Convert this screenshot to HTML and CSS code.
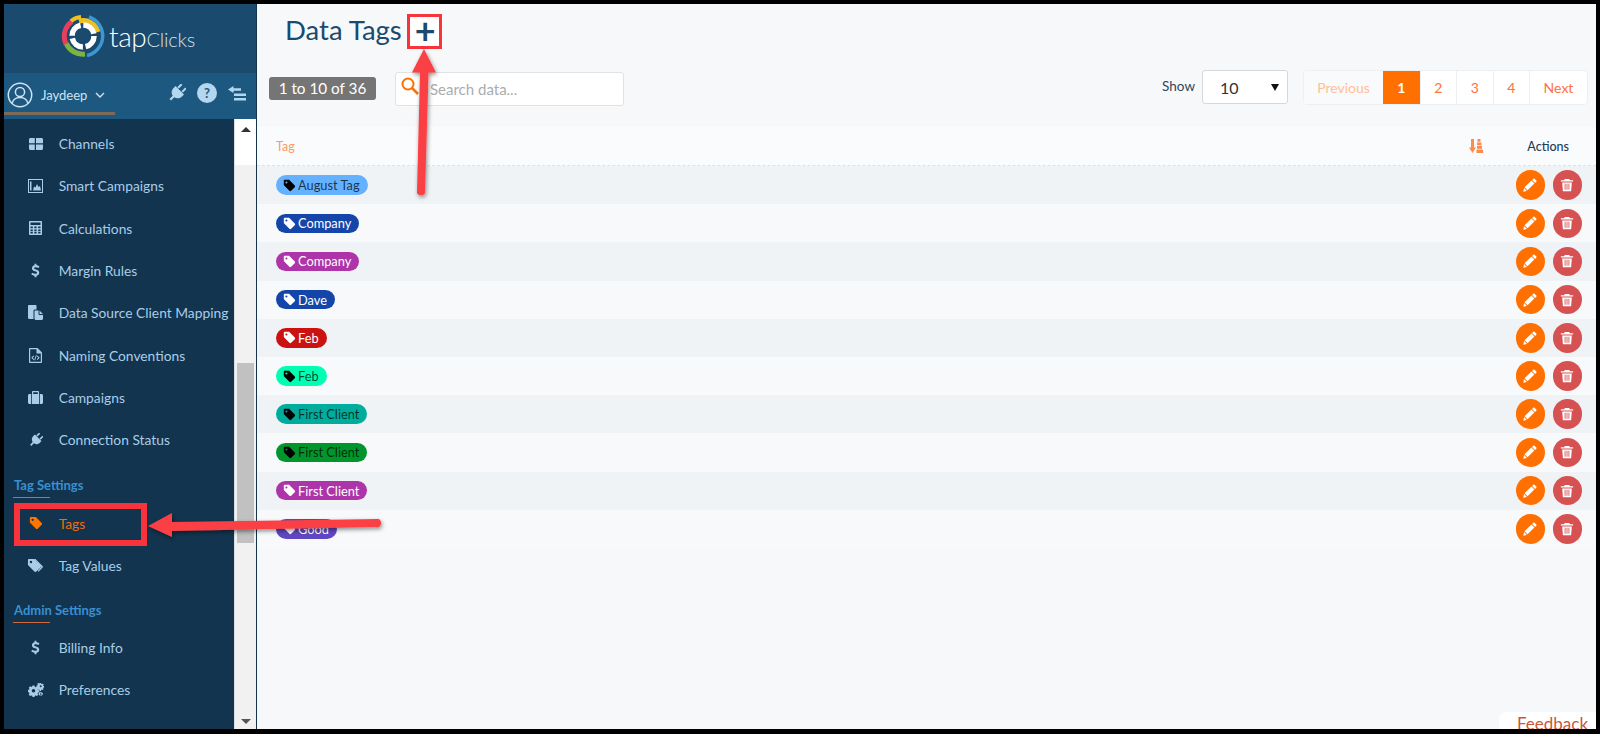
FILE: index.html
```html
<!DOCTYPE html>
<html lang="en">
<head>
<meta charset="utf-8">
<title>Data Tags</title>
<link rel="stylesheet" href="styles.css">
</head>
<body>
<svg class="defs" width="0" height="0">
  <defs>
    <symbol id="i-tag" viewBox="0 0 16 16"><path fill-rule="evenodd" d="M1 2.200C1 1.500 1.500 1 2.200 1H7c.5 0 .8.2 1.100.5l6.400 6.400c.6.6.6 1.500 0 2.100l-4.500 4.500c-.6.6-1.500.6-2.100 0L1.500 8.100C1.200 7.800 1 7.400 1 7zM4.200 3a1.300 1.300 0 1 0 0 2.600 1.300 1.300 0 0 0 0-2.600z"/></symbol>
    <symbol id="i-pencil" viewBox="0 0 16 16"><path d="M11.800.8c.4-.4 1-.4 1.400 0l2 2c.4.4.4 1 0 1.400l-1.400 1.400-3.400-3.400zM9.600 2.900 13 6.300 5.200 14.100 1.800 10.700zM1.200 11.500 4.500 14.800.4 15.600z"/></symbol>
    <symbol id="i-trash" viewBox="0 0 16 16"><path fill-rule="evenodd" d="M5.500 1h5l.8 1.500H15V4H1V2.500h3.700zM2.500 5h11l-.8 10H3.300zM5.300 6.500v7h1v-7zM7.500 6.500v7h1v-7zM9.700 6.500v7h1v-7z"/></symbol>
    <symbol id="i-plug" viewBox="0 0 16 16"><g transform="rotate(45 8 8)"><path d="M4.500-.5H6.300V4H4.500zM9.700-.5h1.800V4H9.700zM2.700 4.500h10.600V7c0 2.900-2.100 5.100-4.300 5.400V16.500H7V12.400C4.800 12.100 2.700 9.900 2.700 7z"/></g></symbol>
    <symbol id="i-dollar" viewBox="0 0 16 16"><path d="M7 .8h2v1.700c1.300.1 2.400.5 3.200 1.100l-1 1.800c-.9-.6-1.900-.9-3-.9-1 0-1.600.4-1.600 1 0 .7.700 1 2 1.400 1.900.6 3.400 1.300 3.400 3.400 0 1.700-1.200 2.900-3 3.200v1.700H7v-1.700c-1.400-.1-2.700-.6-3.600-1.400l1.100-1.800c1 .8 2.100 1.200 3.300 1.200 1.100 0 1.800-.4 1.800-1.100 0-.8-.8-1.100-2.100-1.500-1.800-.6-3.300-1.300-3.300-3.300 0-1.700 1.200-2.900 2.800-3.200z"/></symbol>
  </defs>
</svg>
<div class="app">
  <aside class="sidebar">
    <div class="brand">
      <svg class="logo-mark" viewBox="0 0 44 44" width="44" height="44" fill="none">
        <path d="M18 7A15.500 15.500 0 0 1 37 18" stroke="#f2c01e" stroke-width="5"/>
        <path d="M28 3A20 20 0 0 1 26 41.500" stroke="#3d97d3" stroke-width="3.500"/>
        <path d="M24 40A18 18 0 0 1 5 29" stroke="#7cb342" stroke-width="5"/>
        <path d="M5 30A18 18 0 0 1 11 7.500" stroke="#e8405c" stroke-width="5"/>
        <path d="M10 7A18 18 0 0 1 20 3" stroke="#f2c01e" stroke-width="4"/>
        <circle cx="22" cy="22" r="11" stroke="#fff" stroke-width="5.500" stroke-dasharray="14.500 2.780"/>
      </svg>
      <div class="logo-text"><span class="tap">tap</span><span class="clicks">Clicks</span></div>
    </div>
    <div class="userbar">
      <svg class="avatar" viewBox="0 0 26 26" width="26" height="26" fill="none" stroke="#cfe3f2" stroke-width="1.500"><circle cx="13" cy="13" r="11.700"/><circle cx="13" cy="10" r="4.600"/><path d="M5 21.500c1-4 4-6 8-6s7 2 8 6"/></svg>
      <span class="username">Jaydeep</span>
      <svg class="chev" viewBox="0 0 10 6" width="10" height="6" fill="none" stroke="#cfe3f2" stroke-width="1.400"><path d="M1 1l4 4 4-4"/></svg>
      <div class="user-tools">
        <svg class="ico-light" width="18" height="18"><use href="#i-plug"/></svg>
        <span class="help">?</span>
        <svg class="lines" viewBox="0 0 18 15" width="18" height="15"><path fill="#b4d6ee" d="M5.500 0V2.300H13V4.700H5.500V7L0 3.500zM6 7.500H18V10H6zM6 12H18V14.500H6z"/></svg>
      </div>
    </div>
    <div class="side-body">
      <nav class="menu">
        <a class="item"><span class="mi"><svg viewBox="0 0 14 12" width="14" height="12"><path d="M0 1.500C0 .7.700 0 1.500 0h4.300v5.300H0zM7 0h5.500c.8 0 1.500.7 1.500 1.500v3.800H7zM0 6.500h5.800V12H1.500C.7 12 0 11.300 0 10.500zM7 6.500h7v4c0 .8-.7 1.500-1.500 1.500H7z"/></svg></span>Channels</a>
        <a class="item"><span class="mi"><svg viewBox="0 0 15 14" width="15" height="14"><path fill-rule="evenodd" d="M0 0h15v14H0zM1 1v12h13V1zM2 2.500h1.500v9H2zM5 11.500l1-4 1.500 1L9 5l1.500 3 1.500-1 1 4.500z"/></svg></span>Smart Campaigns</a>
        <a class="item"><span class="mi"><svg viewBox="0 0 13 14" width="13" height="14"><path fill-rule="evenodd" d="M1 0h11c.6 0 1 .4 1 1v12c0 .6-.4 1-1 1H1c-.6 0-1-.4-1-1V1c0-.6.4-1 1-1zM1.500 1.500v2.500h10V1.500zM1.500 5.500v1.800h2.300V5.500zM5.300 5.500v1.800h2.300V5.500zM9.200 5.500v1.800h2.300V5.500zM1.500 8.500v1.800h2.300V8.500zM5.300 8.500v1.800h2.300V8.500zM9.200 8.500v1.800h2.300V8.500zM1.500 11v1.500h2.300V11zM5.300 11v1.500h2.300V11zM9.200 11v1.500h2.300V11z"/></svg></span>Calculations</a>
        <a class="item"><span class="mi"><svg width="15" height="15"><use href="#i-dollar"/></svg></span>Margin Rules</a>
        <a class="item"><span class="mi"><svg viewBox="0 0 15 15" width="15" height="15"><path d="M0 1.200C0 .5.500 0 1.200 0h6.300c.6 0 1 .4 1 1v3.500H7C6 4.500 5.500 5 5.500 6v8H1.200C.5 14 0 13.500 0 12.800zM6.500 6.500c0-.6.400-1 1-1h3V9c0 .5.500 1 1 1H15v3.800c0 .6-.5 1.200-1.200 1.200H7.700c-.7 0-1.200-.5-1.200-1.200zM11.500 5.500 15 9h-3.500z"/></svg></span>Data Source Client Mapping</a>
        <a class="item"><span class="mi"><svg viewBox="0 0 13 15" width="13" height="15"><path fill-rule="evenodd" d="M1 0h7.500L13 4.500V14c0 .6-.4 1-1 1H1c-.6 0-1-.4-1-1V1c0-.6.400-1 1-1zM1.200 1.200v12.600h10.600V5.500H7.500V1.200zM4.500 7.500l.7.7L3.700 9.800l1.500 1.500-.7.7L2.300 9.800zM8.500 7.500l2.200 2.300L8.500 12l-.7-.7 1.500-1.500-1.500-1.600zM7 7l.8.2-1.800 5.300-.8-.2z"/></svg></span>Naming Conventions</a>
        <a class="item"><span class="mi"><svg viewBox="0 0 15 13" width="15" height="13"><path fill-rule="evenodd" d="M5 0h5c.6 0 1 .4 1 1v2h2.500c.8 0 1.500.7 1.500 1.500v7c0 .8-.7 1.500-1.500 1.500h-12C.7 13 0 12.300 0 11.500v-7C0 3.700.7 3 1.500 3H4V1c0-.6.400-1 1-1zM5.200 1.200V3h4.600V1.200zM3 3v10h.8V3zM11.200 3v10h.8V3z"/></svg></span>Campaigns</a>
        <a class="item"><span class="mi"><svg width="14" height="14"><use href="#i-plug"/></svg></span>Connection Status</a>
        <div class="section">Tag Settings</div>
        <a class="item active"><span class="mi"><svg width="14" height="14"><use href="#i-tag"/></svg></span>Tags</a>
        <a class="item"><span class="mi"><svg viewBox="0 0 17 15" width="17" height="15"><use href="#i-tag" width="15" height="15"/><path d="M8.500 1l7 7c.5.500.5 1.200 0 1.700l-4 4-.8-.8 3.700-4-7.500-7.900z"/></svg></span>Tag Values</a>
        <div class="section">Admin Settings</div>
        <a class="item"><span class="mi"><svg width="15" height="15"><use href="#i-dollar"/></svg></span>Billing Info</a>
        <a class="item"><span class="mi"><svg viewBox="0 0 16 14" width="16" height="14"><path fill-rule="evenodd" d="M4.500 2.500h2l.3 1.300 1 .4 1.100-.7 1.400 1.400-.7 1.100.4 1 1.300.3v2l-1.300.3-.4 1 .7 1.100-1.400 1.400-1.100-.7-1 .4-.3 1.300h-2l-.3-1.300-1-.4-1.100.7L.7 11.500l.7-1.100-.4-1-1-.3v-2l1-.3.4-1-.7-1.100 1.400-1.400 1.100.7 1-.4zM5.500 6a1.800 1.800 0 1 0 0 3.600 1.800 1.800 0 0 0 0-3.600z"/><path fill-rule="evenodd" d="M13 0l.4 1 .9.100.5-.5.9.9-.5.700.2.800 1 .2v1.300l-1 .2-.3.800.5.700-.9.900-.7-.5-.8.3-.2 1h-1.300l-.2-1-.7-.3-.7.500-.9-.9.500-.7-.3-.8-.8-.2V2.400l.9-.2.3-.8-.5-.7.9-.9.700.5.700-.1zM12.700 2.300a1 1 0 1 0 0 2 1 1 0 0 0 0-2zM13 9l.8.200.3.800.8.100v1.400l-.8.200-.3.800-.8.200-.7-.5-.8.3-.9-.9.300-.8-.5-.7.900-.9.800.200zM12.800 10.300a.8.8 0 1 0 0 1.600.8.8 0 0 0 0-1.600z"/></svg></span>Preferences</a>
      </nav>
      <div class="scrollbar">
        <div class="sb-top"><span class="arrow-up"></span></div>
        <div class="sb-gap"></div>
        <div class="sb-thumb"></div>
        <div class="sb-fill"></div>
        <div class="sb-bottom"><span class="arrow-down"></span></div>
      </div>
    </div>
  </aside>
  <main class="content">
    <header class="titlebar">
      <h1>Data Tags</h1>
      <span class="add">+</span>
    </header>
    <div class="toolbar">
      <span class="count">1 to 10 of 36</span>
      <label class="search">
        <svg class="search-ico" viewBox="0 0 18 18" width="18" height="18" fill="none" stroke="#ff6f00" stroke-width="2"><circle cx="7" cy="7" r="5.500"/><path d="M11 11l6 6" stroke-width="2.500"/></svg>
        <span class="placeholder">Search data...</span>
      </label>
      <span class="show">Show</span>
      <div class="select"><span>10</span><i class="caret"></i></div>
      <div class="pager">
        <span class="pg prev">Previous</span>
        <span class="pg cur">1</span>
        <span class="pg">2</span>
        <span class="pg">3</span>
        <span class="pg">4</span>
        <span class="pg next">Next</span>
      </div>
    </div>
    <div class="table">
      <div class="thead">
        <span class="th-tag">Tag</span>
        <svg class="sort" viewBox="0 0 14 14" width="14" height="14" fill="#ff8a4c"><path d="M2 0h3v8.500h2L3.500 14 0 8.500h2zM8.500 0h3v2.800h-3zM8 3.500h4.500v2.800H8zM8 7h5v2.800H8zM7.500 10.500H14V14H7.500z"/></svg>
        <span class="th-actions">Actions</span>
      </div>
      <div class="row odd"><span class="pill dark" style="background:#64b2ff"><svg><use href="#i-tag"/></svg>August Tag</span><div class="acts"><span class="btn edit"><svg><use href="#i-pencil"/></svg></span><span class="btn del"><svg><use href="#i-trash"/></svg></span></div></div>
      <div class="row"><span class="pill" style="background:#1445a8"><svg><use href="#i-tag"/></svg>Company</span><div class="acts"><span class="btn edit"><svg><use href="#i-pencil"/></svg></span><span class="btn del"><svg><use href="#i-trash"/></svg></span></div></div>
      <div class="row odd"><span class="pill" style="background:#ad34a9"><svg><use href="#i-tag"/></svg>Company</span><div class="acts"><span class="btn edit"><svg><use href="#i-pencil"/></svg></span><span class="btn del"><svg><use href="#i-trash"/></svg></span></div></div>
      <div class="row"><span class="pill" style="background:#1445a8"><svg><use href="#i-tag"/></svg>Dave</span><div class="acts"><span class="btn edit"><svg><use href="#i-pencil"/></svg></span><span class="btn del"><svg><use href="#i-trash"/></svg></span></div></div>
      <div class="row odd"><span class="pill" style="background:#cc1111"><svg><use href="#i-tag"/></svg>Feb</span><div class="acts"><span class="btn edit"><svg><use href="#i-pencil"/></svg></span><span class="btn del"><svg><use href="#i-trash"/></svg></span></div></div>
      <div class="row"><span class="pill dark" style="background:#00ffb2"><svg><use href="#i-tag"/></svg>Feb</span><div class="acts"><span class="btn edit"><svg><use href="#i-pencil"/></svg></span><span class="btn del"><svg><use href="#i-trash"/></svg></span></div></div>
      <div class="row odd"><span class="pill dark" style="background:#00ad9c"><svg><use href="#i-tag"/></svg>First Client</span><div class="acts"><span class="btn edit"><svg><use href="#i-pencil"/></svg></span><span class="btn del"><svg><use href="#i-trash"/></svg></span></div></div>
      <div class="row"><span class="pill dark" style="background:#00962b"><svg><use href="#i-tag"/></svg>First Client</span><div class="acts"><span class="btn edit"><svg><use href="#i-pencil"/></svg></span><span class="btn del"><svg><use href="#i-trash"/></svg></span></div></div>
      <div class="row odd"><span class="pill" style="background:#ad34a9"><svg><use href="#i-tag"/></svg>First Client</span><div class="acts"><span class="btn edit"><svg><use href="#i-pencil"/></svg></span><span class="btn del"><svg><use href="#i-trash"/></svg></span></div></div>
      <div class="row"><span class="pill" style="background:#6047c2"><svg><use href="#i-tag"/></svg>Good</span><div class="acts"><span class="btn edit"><svg><use href="#i-pencil"/></svg></span><span class="btn del"><svg><use href="#i-trash"/></svg></span></div></div>
    </div>
    <div class="feedback">Feedback</div>
  </main>
  <div class="callout-box box-tags"></div>
  <div class="callout-box box-add"></div>
  <svg class="callouts" viewBox="0 0 1600 734" width="1600" height="734">
    <defs>
      <filter id="drop" x="-20%" y="-20%" width="140%" height="140%"><feDropShadow dx="1" dy="2" stdDeviation="2" flood-color="#000" flood-opacity=".45"/></filter>
    </defs>
    <g fill="#fa4045" filter="url(#drop)">
      <path d="M424 49 436 72.500 428.500 72.500 425 192.500C425 196 417 196 417 192.500L420 72.500 412 72.500z"/>
      <path d="M148 526 172 513 172 522 378 519C382 519 382 527 378 527L172 531 172 537z"/>
    </g>
  </svg>
</div>
</body>
</html>
```
FILE: styles.css
```css
* { box-sizing: border-box; }
html, body { margin: 0; height: 100%; }
body {
  background: #000;
  padding: 4px 4px 5px;
  font-family: Lato, "Open Sans", sans-serif;
  overflow: hidden;
}
.defs { position: absolute; }
.app {
  position: relative;
  display: flex;
  height: 725px;
  overflow: hidden;
  background: #f6f8fa;
}
.sidebar {
  width: 253px;
  flex: none;
  display: flex;
  flex-direction: column;
  background: #12344f;
  border-right: 1px solid #12344f;
}
.brand {
  height: 69px;
  background: #1a4a6e;
  display: flex;
  align-items: center;
  padding: 0 0 6px 57px;
  gap: 4px;
}
.logo-text { color: #fff; line-height: 1; white-space: nowrap; }
.tap { font-size: 28px; font-weight: 300; letter-spacing: -.4px; }
.clicks { font-size: 20px; font-weight: 300; color: #d4e1ea; letter-spacing: -.2px; }
.userbar {
  height: 46px;
  background: #1c5880;
  display: flex;
  align-items: center;
  padding: 0 10px 2px 3px;
  color: #cfe3f2;
  position: relative;
  font-size: 13px;
}
.userbar::after {
  content: "";
  position: absolute;
  left: 0;
  bottom: 4px;
  width: 111px;
  height: 3px;
  background: #7d6a58;
}
.username { margin: 0 8px 0 8px; }
.user-tools { margin: 0 0 4px auto; display: flex; align-items: center; gap: 11px; }
.ico-light { fill: #b4d6ee; }
.help {
  width: 20px; height: 20px; border-radius: 50%;
  background: #b4d6ee; color: #1c5880;
  font-size: 13px; font-weight: 700;
  display: flex; align-items: center; justify-content: center;
}
.side-body { flex: 1; display: flex; min-height: 0; }
.menu { width: 230px; flex: none; padding-top: 3.500px; }
.item {
  height: 42.3px;
  display: flex;
  align-items: center;
  font-size: 13.800px;
  color: #a9cde8;
  white-space: nowrap;
}
.mi {
  width: 54.700px;
  padding: 0 13px 0 22px;
  flex: none;
  display: flex;
  justify-content: center;
  fill: #a9cde8;
}
.mi svg { flex: none; }
.item.active { color: #f26a0a; }
.item.active .mi { fill: #ff7400; }
.section {
  height: 40px;
  margin-left: 10px;
  padding-top: 16px;
  font-size: 13px;
  font-weight: 700;
  color: #3a8fcf;
  position: relative;
}
.section::after {
  content: "";
  position: absolute;
  left: -1px;
  top: 36px;
  width: 37px;
  height: 1px;
  background: #d0683c;
}
.section + .item.active { margin-top: 1px; }
.scrollbar {
  width: 22px;
  flex: none;
  display: flex;
  flex-direction: column;
  background: #f1f1f1;
  border-left: 1px solid #dcdcdc;
}
.sb-top { height: 46px; background: #fff; display: flex; justify-content: center; padding-top: 8px; }
.sb-gap { height: 198px; }
.sb-thumb { height: 180px; margin: 0 2px; background: #c1c1c1; }
.sb-fill { flex: 1; }
.sb-bottom { height: 16px; display: flex; justify-content: center; align-items: center; }
.arrow-up { width: 0; height: 0; border: 5px solid transparent; border-top: 0; border-bottom-color: #333; }
.arrow-down { width: 0; height: 0; border: 5px solid transparent; border-bottom: 0; border-top-color: #555; }
.content { flex: 1; min-width: 0; position: relative; }
.titlebar {
  height: 52px;
  display: flex;
  align-items: center;
  padding-left: 28px;
  color: #1c4a6e;
}
h1 { margin: 0; font-size: 27.500px; font-weight: 400; line-height: 1; }
.add {
  width: 35px; height: 35px;
  margin: 3px 0 0 6px;
  background: #fff;
  font-size: 36px;
  font-weight: 700;
  line-height: 33px;
  text-align: center;
}
.toolbar {
  height: 71px;
  display: flex;
  align-items: flex-start;
  padding: 16px 8px 0 12px;
  font-size: 14px;
}
.count {
  width: 107px; height: 23px; margin-top: 5px;
  background: #757575; color: #fff;
  border-radius: 3px;
  text-align: center;
  line-height: 23px;
  font-size: 15.300px;
}
.search {
  width: 229px; height: 34px;
  margin-left: 19px; margin-top: 0;
  background: #fff;
  border: 1px solid #dfe3e6;
  border-radius: 3px;
  display: flex;
  align-items: center;
  position: relative;
}
.search-ico { position: absolute; left: 5px; top: 4px; }
.placeholder { margin-left: 34px; color: #a9adb0; font-size: 15px; }
.show { margin-left: auto; color: #33475a; font-size: 13.500px; padding-top: 6px; }
.select {
  width: 86px; height: 34px;
  margin-left: 7px; margin-top: -2px;
  background: #fff;
  border: 1px solid #d5d9dc;
  border-radius: 3px;
  display: flex;
  align-items: center;
  justify-content: space-between;
  padding: 0 8px 0 17px;
  font-size: 16px;
  color: #333;
}
.caret { width: 0; height: 0; border: 4px solid transparent; border-bottom: 0; border-top: 7px solid #111; }
.pager {
  display: flex;
  height: 35px;
  margin-left: 15px;
  margin-top: -2px;
  border: 1px solid #edf0f2;
  border-radius: 4px;
  background: #fff;
  overflow: hidden;
  color: #ff7043;
  font-size: 14px;
}
.pg {
  width: 36.500px;
  display: flex; align-items: center; justify-content: center;
  border-left: 1px solid #edf0f2;
}
.prev { width: 79px; border-left: 0; background: #f8fafb; color: #ffc097; }
.next { width: 58px; }
.cur { background: #ff7000; color: #fff; border-left: 0; font-weight: 700; }
.thead {
  height: 39px;
  display: flex;
  align-items: center;
  padding: 0 27px 0 19px;
  background: #fafbfc;
  border-bottom: 1px dashed #dfe2e5;
  font-size: 12.500px;
}
.th-tag { color: #ff9a63; }
.sort { margin-left: auto; }
.th-actions { margin-left: 44px; color: #1c3b57; font-weight: 500; }
.row {
  height: 38.200px;
  display: flex;
  align-items: center;
  justify-content: space-between;
  padding: 0 14px 0 19px;
  background: #f7f9fb;
}
.row.odd { background: #f0f3f6; }
.pill {
  height: 19.500px;
  display: inline-flex;
  align-items: center;
  padding: 0 8px 0 7px;
  border-radius: 10px;
  font-size: 12.800px;
  color: #fff;
  fill: #fff;
  white-space: nowrap;
}
.pill.dark { color: rgba(0, 0, 0, .72); fill: #000; }
.pill svg { width: 13px; height: 13px; margin-right: 2px; flex: none; }
.acts { display: flex; gap: 7.500px; }
.btn {
  width: 29.500px; height: 29.500px;
  border-radius: 50%;
  display: flex; align-items: center; justify-content: center;
  fill: #fff;
}
.btn svg { width: 14px; height: 14px; }
.edit { background: #ff7000; }
.del { background: #d65252; }
.feedback {
  position: absolute;
  right: 0;
  bottom: 0;
  width: 97px;
  height: 17px;
  padding: 3px 0 0 18px;
  background: #fff;
  border-top-left-radius: 8px;
  color: #c9573b;
  font-size: 17px;
  line-height: 18px;
  overflow: hidden;
}
.callout-box { position: absolute; border-style: solid; border-color: #f8333c; }
.box-tags { left: 10px; top: 499px; width: 133px; height: 43px; border-width: 6px; }
.box-add { left: 403px; top: 10px; width: 35px; height: 35px; border-width: 3px; }
.callouts { position: absolute; left: -4px; top: -4px; pointer-events: none; }
```
